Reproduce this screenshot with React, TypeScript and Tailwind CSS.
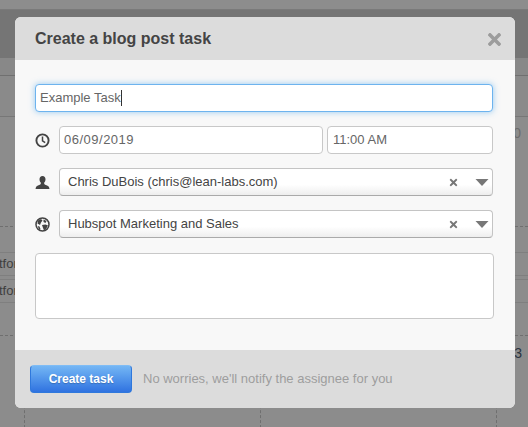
import React from "react";
import { FaTimes } from "react-icons/fa";

function Cell({ className = "" }: { className?: string }) {
  return <div className={className} />;
}

function Row({ icon, children }: { icon: React.ReactNode; children: React.ReactNode }) {
  return (
    <div className="flex items-center h-7">
      <div className="w-6 shrink-0 flex items-center text-[#444]">{icon}</div>
      {children}
    </div>
  );
}

function Select({ label }: { label: string }) {
  return (
    <div className="flex-1 h-7 flex items-center rounded-[4px] border border-[#c4c4c4] border-b-[#aaa] bg-gradient-to-b from-white from-60% to-[#eeeeee] pl-[8px] pr-[3px] text-[#444]">
      <span className="flex-1">{label}</span>
      <FaTimes className="w-[11px] h-[11px] text-[#777] mr-[16px]" />
      <svg viewBox="0 0 14 7" className="w-[14px] h-[7px] text-[#777]" fill="currentColor">
        <path d="M0.5 0h13L7 7z" />
      </svg>
    </div>
  );
}

export default function App() {
  return (
    <div className="relative w-[528px] h-[427px] overflow-hidden bg-[#8c8c8c] font-['Liberation_Sans',Arial,sans-serif] text-[13px] text-[#555]">
      {/* dimmed page behind the dialog */}
      <div className="h-[10px] bg-[#8d8d8d] border-b border-[#7a7a7a]" />
      <div className="h-[48px] bg-[#757575]" />
      <div className="h-[17px] bg-[#888] border-b border-[#707070] box-content" />
      <div className="h-[40px] bg-[#8a8a8a] border-b border-[#777] box-content" />
      <div className="h-[109px] relative">
        <span className="absolute right-[7px] top-[6px] text-[14px] text-[#6c6c6c]">0</span>
      </div>
      <div className="border-t border-dashed border-[#6f6f6f]" />
      <div className="h-[25px]" />
      <div className="h-[24px] border-y border-[#7f7f7f] text-[#3e3e3e] overflow-hidden leading-[22px]">
        <span className="ml-[-1px] block">tfor</span>
      </div>
      <div className="h-[3px]" />
      <div className="h-[24px] border-y border-[#7f7f7f] text-[#3e3e3e] overflow-hidden leading-[22px]">
        <span className="ml-[-1px] block">tfor</span>
      </div>
      <div className="h-[32px]" />
      <div className="border-t border-dashed border-[#6f6f6f]" />
      <div className="relative h-[92px]">
        <span className="absolute right-[6px] top-[7px] text-[14px] text-[#2a3440]">3</span>
        <Cell className="absolute left-[24px] top-0 bottom-0 border-l border-dashed border-[#6f6f6f]" />
        <Cell className="absolute left-[260px] top-0 bottom-0 border-l border-dashed border-[#6f6f6f]" />
        <Cell className="absolute left-[496px] top-0 bottom-0 border-l border-dashed border-[#6f6f6f]" />
      </div>

      {/* dialog */}
      <div className="absolute left-[15px] top-[17px] w-[500px] h-[391px] rounded-[6px] overflow-hidden bg-[#f8f8f8] flex flex-col">
        <div className="h-[43px] shrink-0 bg-[#dcdcdc] flex items-center pl-[20px] pr-[11px] justify-between">
          <span className="text-[16px] font-bold text-[#444]">Create a blog post task</span>
          <FaTimes className="w-[19px] h-[19px] text-[#9c9c9c] mt-[1px]" />
        </div>
        <div className="flex-1 pl-[20px] pr-[22px] pt-[24px]">
          <div className="h-7 rounded-[4px] border border-[#6db3ee] shadow-[0_0_6px_rgba(82,168,236,0.6)] bg-white pl-[4px] flex items-center text-[#666]">
            <span>Example Task</span>
            <span className="w-px h-[16px] bg-[#333]" />
          </div>
          <div className="mt-[14px] flex flex-col gap-[14px]">
            <Row
              icon={
                <svg viewBox="0 0 15 15" className="w-[15px] h-[15px]" fill="none" stroke="currentColor">
                  <circle cx="7.5" cy="7.5" r="6.1" strokeWidth="1.9" />
                  <path d="M7.5 3.6V7.8L10.2 9.6" strokeWidth="1.5" />
                </svg>
              }
            >
              <div className="w-[264px] h-7 rounded-[4px] border border-[#c8c8c8] bg-white pl-[4px] flex items-center text-[#666] tracking-[0.5px]">06/09/2019</div>
              <div className="ml-[4px] flex-1 h-7 rounded-[4px] border border-[#c8c8c8] bg-white pl-[5px] flex items-center text-[#666]">11:00 AM</div>
            </Row>
            <Row
              icon={
                <svg viewBox="0 0 15 15" className="w-[15px] h-[15px]" fill="currentColor">
                  <path d="M7.5 1C5.600 1 4.500 2.400 4.500 4.300c0 1.400.5 2.600 1.300 3.300v1.200c-.2.6-1 1-2.300 1.500C2 10.800 1 11.400.5 14h14c-.5-2.600-1.500-3.200-3-3.700-1.300-.5-2.100-.9-2.300-1.500V7.600c.8-.7 1.300-1.900 1.300-3.300C10.500 2.400 9.400 1 7.500 1z" />
                </svg>
              }
            >
              <Select label="Chris DuBois (chris@lean-labs.com)" />
            </Row>
            <Row
              icon={
                <svg viewBox="0 0 15 15" className="w-[15px] h-[15px]">
                  <circle cx="7.500" cy="7.500" r="6.500" fill="none" stroke="currentColor" strokeWidth="1.500" />
                  <path fill="currentColor" d="M3 3.500 6 2l1.500 1.500L6 5.500l-1 2.500-2.500-1.500zM8.500 2.500l3 1.500-1 2-2-1zM7 8l3.500-.5 2.500 1-2 3.500-2 1.500-1-2.500zM2.500 9l2 .5 1 2.500-1 1z" />
                </svg>
              }
            >
              <Select label="Hubspot Marketing and Sales" />
            </Row>
          </div>
          <div className="mt-[15px] -mr-px h-[66px] rounded-[4px] border border-[#c8c8c8] bg-white" />
        </div>
        <div className="h-[58px] shrink-0 bg-[#dcdcdc] flex items-center pl-[15px]">
          <button className="w-[102px] h-7 rounded-[4px] border border-[#2f78dc] border-t-[#7fbcf5] bg-gradient-to-b from-[#74b6f4] to-[#3072e0] text-white font-bold text-[12px] [text-shadow:0_1px_1px_rgba(0,0,0,0.2)]">
            Create task
          </button>
          <span className="ml-[11px] text-[#9e9e9e] text-[13px]">No worries, we'll notify the assignee for you</span>
        </div>
      </div>
    </div>
  );
}
